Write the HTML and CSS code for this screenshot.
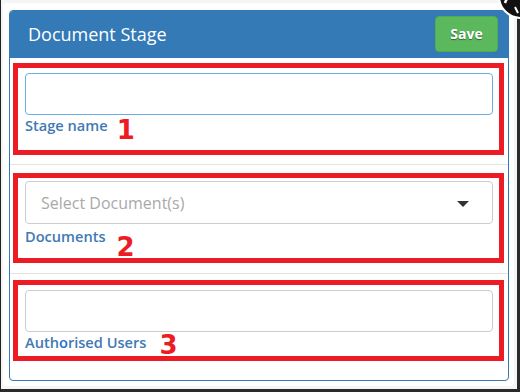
FILE: index.html
```html
<!DOCTYPE html>
<html lang="en">
<head>
    <meta charset="UTF-8">
    <meta name="viewport" content="width=device-width, initial-scale=1.0">
    <title>Document Stage</title>
    <link rel="stylesheet" href="styles.css">
</head>
<body>
    <div class="modal">
        <div class="panel">
            <div class="panel-heading">
                <span class="panel-title">Document Stage</span>
                <button class="btn-save">Save</button>
            </div>

            <div class="stage-group group-1">
                <div class="mark-box">
                    <input class="field field-focus" type="text">
                    <div class="label-row">
                        <label class="field-label">Stage name</label>
                        <span class="step-no">1</span>
                    </div>
                </div>
            </div>

            <div class="stage-group group-2">
                <div class="mark-box">
                    <div class="field select-field">
                        <span class="placeholder">Select Document(s)</span>
                        <span class="caret"></span>
                    </div>
                    <div class="label-row">
                        <label class="field-label">Documents</label>
                        <span class="step-no">2</span>
                    </div>
                </div>
            </div>

            <div class="stage-group group-3">
                <div class="mark-box">
                    <input class="field" type="text">
                    <div class="label-row">
                        <label class="field-label">Auth<span class="hl">o</span>rised Users</label>
                        <span class="step-no">3</span>
                    </div>
                </div>
            </div>
        </div>
    </div>

    <svg class="close-btn" width="26" height="22" viewBox="0 0 26 22">
        <circle cx="27" cy="-4" r="22" fill="#111" stroke="#fff" stroke-width="2"/>
        <path d="M11 3 A 15 15 0 0 1 22 -7" fill="none" stroke="#fff" stroke-width="2.5"/>
        <path d="M21 7 L24 13" fill="none" stroke="#fff" stroke-width="2"/>
    </svg>
</body>
</html>
```

FILE: styles.css
```css
html {
    background: #f5f5f5;
}

body {
    margin: 0;
    padding: 3px 3px 3px 2px;
    border-left: 1px solid #222;
    border-right: 3px solid #2a2a2a;
    border-bottom: 3px solid #2a2a2a;
    background: #f5f5f5;
    font-family: "Open Sans", "Liberation Sans", sans-serif;
    overflow: hidden;
}

.modal {
    background: #fff;
    border-radius: 4px;
    padding: 7px 5px 5px 6px;
}

.panel {
    width: 500px;
    box-sizing: border-box;
    border: 1px solid #337ab7;
    border-radius: 4px;
    overflow: hidden;
    background: #fff;
}

.panel-heading {
    display: flex;
    justify-content: space-between;
    align-items: center;
    height: 47px;
    box-sizing: border-box;
    padding: 4px 10px 6px 18px;
    background: #337ab7;
}

.panel-title {
    color: #fff;
    font-size: 18px;
    font-weight: 400;
    margin-top: 1px;
}

.btn-save {
    width: 63px;
    height: 36px;
    border: 1px solid #4cae4c;
    border-radius: 4px;
    background: #5cb85c;
    color: #fff;
    font-family: "Open Sans", "Liberation Sans", sans-serif;
    font-size: 14px;
    font-weight: 700;
    text-shadow: 0 1px 1px rgba(0, 0, 0, 0.45);
    padding: 0;
}

.stage-group {
    padding: 0 4px 0 3px;
    border-bottom: 1px solid #e3e3e3;
}

.stage-group:last-child {
    border-bottom: none;
}

.group-1 { padding-top: 5px; padding-bottom: 9px; }
.group-2 { padding-top: 8px; padding-bottom: 10px; }
.group-3 { padding-top: 6px; padding-bottom: 19px; }

.mark-box {
    box-sizing: border-box;
    border: 5px solid #ed1c24;
    padding: 5px 6px 0 7px;
}

.group-1 .mark-box { height: 92px; }
.group-2 .mark-box { height: 90px; padding-top: 3px; }
.group-3 .mark-box { height: 81px; }

.field {
    display: block;
    width: 100%;
    height: 42px;
    box-sizing: border-box;
    margin: 0;
    border: 1px solid #ccc;
    border-radius: 4px;
    background: #fff;
    outline: none;
}

.field-focus {
    border-color: #6aaee3;
}

.select-field {
    height: 43px;
    display: flex;
    align-items: center;
    justify-content: space-between;
    padding: 0 23px 0 15px;
}

.placeholder {
    color: #a9a9a9;
    font-size: 16px;
}

.caret {
    width: 0;
    height: 0;
    border-left: 6px solid transparent;
    border-right: 6px solid transparent;
    border-top: 6px solid #333;
    margin-top: 2px;
}

.label-row {
    display: flex;
    align-items: flex-start;
}

.field-label {
    color: #4179b2;
    font-size: 14.6px;
    font-weight: 600;
    line-height: 20px;
}

.group-2 .field-label { margin-top: 2px; }

.hl {
    color: #1c6fd6;
}

.step-no {
    margin-left: 9px;
    color: #ed1c24;
    font-family: "DejaVu Sans", sans-serif;
    font-weight: 700;
    font-size: 26px;
    line-height: 26px;
}

.group-1 .step-no { margin-top: 2px; }
.group-2 .step-no { margin-top: 10px; margin-left: 11px; }
.group-3 .step-no { margin-top: 0; margin-left: 13px; }

.close-btn {
    position: fixed;
    top: 0;
    right: 0;
}
```
